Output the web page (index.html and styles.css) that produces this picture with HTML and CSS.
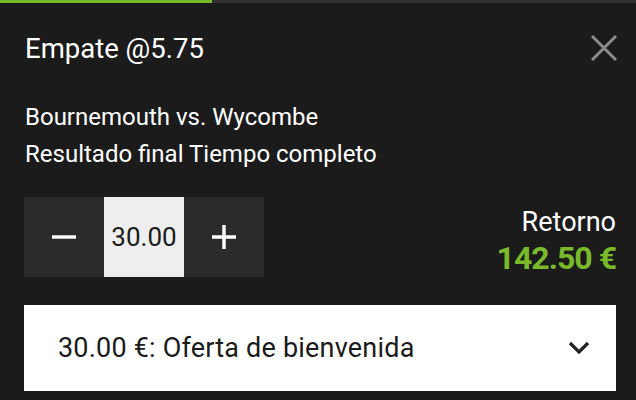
FILE: index.html
```html
<!DOCTYPE html>
<html lang="es">
<head>
  <meta charset="UTF-8" />
  <meta name="viewport" content="width=device-width, initial-scale=1.0"/>
  <title>Boleto</title>
  <link rel="stylesheet" href="styles.css">
</head>
<body>
  <div class="progress"><div class="progress-fill"></div></div>

  <section class="slip">
    <div class="slip-head">
      <h1>Empate @5.75</h1>
      <button class="btn-close" aria-label="Cerrar">
        <svg width="26" height="26" viewBox="0 0 26 26">
          <path d="M1 1 L25 25 M25 1 L1 25" stroke="#8b8b8b" stroke-width="3" fill="none"/>
        </svg>
      </button>
    </div>

    <div class="event">
      <p>Bournemouth vs. Wycombe</p>
      <p>Resultado final Tiempo completo</p>
    </div>

    <div class="stake-row">
      <div class="stepper">
        <button class="btn-step">
          <svg width="26" height="26" viewBox="0 0 26 26"><path d="M1 13 H25" stroke="#fff" stroke-width="3.4"/></svg>
        </button>
        <input class="stake-input" type="text" value="30.00" />
        <button class="btn-step">
          <svg width="26" height="26" viewBox="0 0 26 26"><path d="M1 13 H25 M13 1 V25" stroke="#fff" stroke-width="3.4"/></svg>
        </button>
      </div>
      <div class="return">
        <div class="return-label">Retorno</div>
        <div class="return-value">142.50 €</div>
      </div>
    </div>

    <div class="offer">
      <span>30.00 €: Oferta de bienvenida</span>
      <svg width="22" height="14" viewBox="0 0 22 14">
        <path d="M2 2 L11 11 L20 2" stroke="#222" stroke-width="3.2" fill="none"/>
      </svg>
    </div>
  </section>
</body>
</html>
```

FILE: styles.css
```css
* { box-sizing: border-box; margin: 0; padding: 0; }
body {
  font-family: Roboto, "Noto Sans", sans-serif;
  background: #1b1b1b;
  color: #fff;
  width: 636px;
  height: 400px;
  overflow: hidden;
}

.progress {
  height: 3px;
  background: #333;
}
.progress-fill {
  width: 212px;
  height: 100%;
  background: #7ab929;
}

.slip {
  padding: 0 20px 0 24px;
}
.slip-head {
  display: flex;
  justify-content: space-between;
  align-items: center;
  height: 92px;
  padding-bottom: 2px;
}
.slip-head h1 {
  font-size: 27.5px;
  font-weight: 400;
  margin-left: 1px;
}
.btn-close {
  background: none;
  border: none;
  width: 26px;
  height: 26px;
  margin-right: -1px;
}

.event {
  margin-top: 4px;
}
.event p {
  font-size: 24px;
  line-height: 37px;
  margin-left: 1px;
}

.stake-row {
  display: flex;
  justify-content: space-between;
  align-items: flex-start;
  margin-top: 24px;
}
.stepper {
  display: flex;
}
.btn-step {
  width: 80px;
  height: 80px;
  background: #2b2b2b;
  border: none;
  display: flex;
  align-items: center;
  justify-content: center;
}
.stake-input {
  width: 80px;
  height: 80px;
  background: #eee;
  border: none;
  text-align: center;
  font-family: inherit;
  font-size: 26px;
  color: #1b1b1b;
}

.return {
  text-align: right;
  padding-top: 8px;
  height: 80px;
}
.return-label {
  font-size: 27px;
  line-height: 34px;
}
.return-value {
  font-size: 32px;
  font-weight: 700;
  letter-spacing: -1px;
  line-height: 38px;
  color: #7ab929;
}

.offer {
  margin-top: 28px;
  height: 86px;
  background: #fff;
  color: #1b1b1b;
  display: flex;
  align-items: center;
  justify-content: space-between;
  padding: 0 26px 0 34px;
  font-size: 27px;
  letter-spacing: 0.2px;
}
```
